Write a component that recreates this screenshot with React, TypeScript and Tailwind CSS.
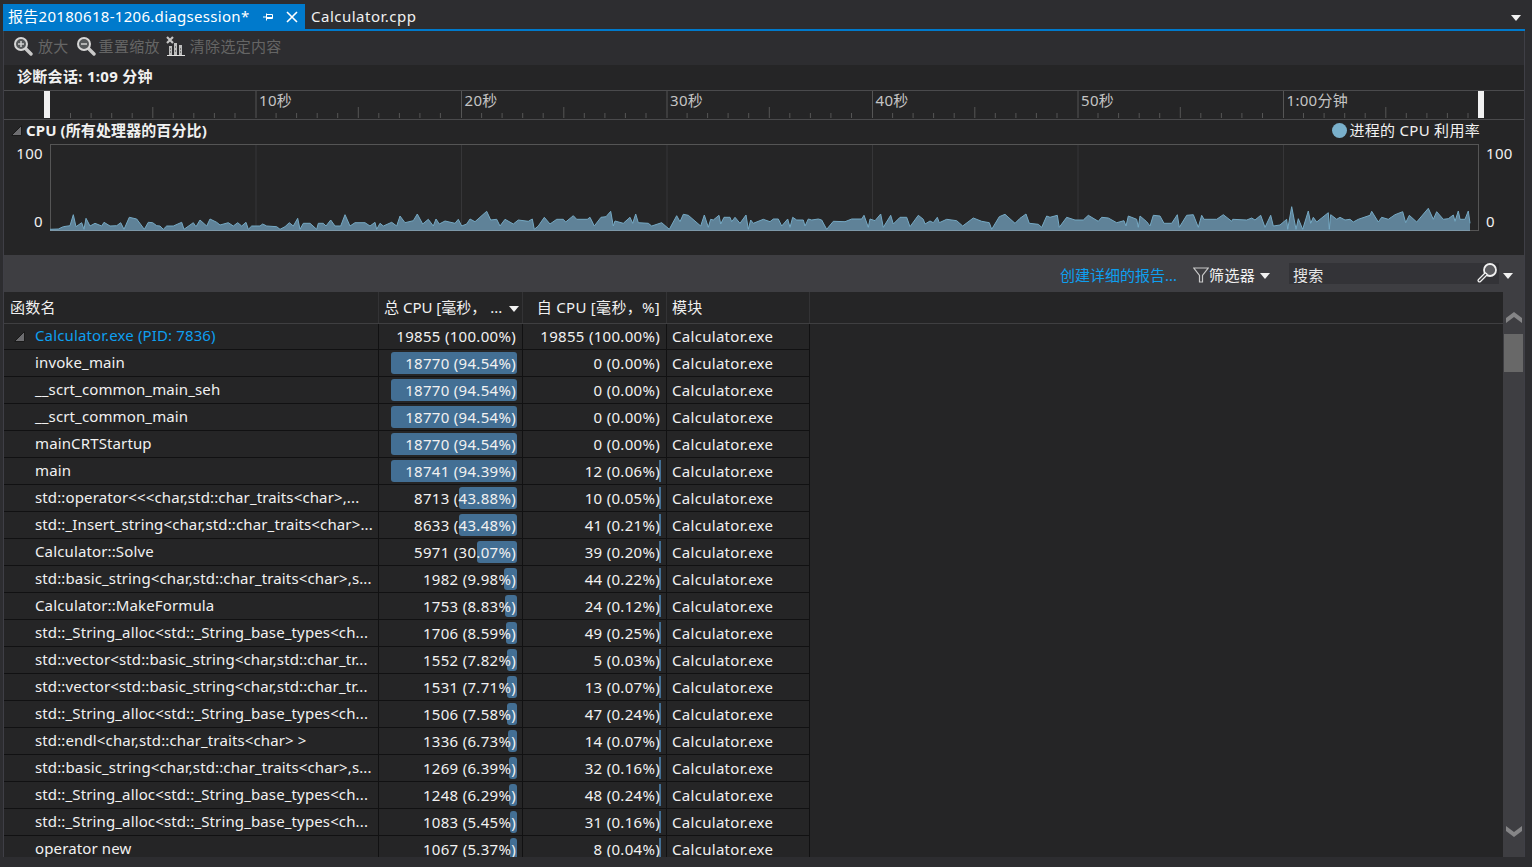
import React from 'react';

const rows: [string, string, number, string, number][] = [
  ['Calculator.exe (PID: 7836)', '19855 (100.00%)', 0, '19855 (100.00%)', 0],
  ['invoke_main', '18770 (94.54%)', 94.54, '0 (0.00%)', 0],
  ['__scrt_common_main_seh', '18770 (94.54%)', 94.54, '0 (0.00%)', 0],
  ['__scrt_common_main', '18770 (94.54%)', 94.54, '0 (0.00%)', 0],
  ['mainCRTStartup', '18770 (94.54%)', 94.54, '0 (0.00%)', 0],
  ['main', '18741 (94.39%)', 94.39, '12 (0.06%)', 0.06],
  ['std::operator<<<char,std::char_traits<char>,...', '8713 (43.88%)', 43.88, '10 (0.05%)', 0.05],
  ['std::_Insert_string<char,std::char_traits<char>...', '8633 (43.48%)', 43.48, '41 (0.21%)', 0.21],
  ['Calculator::Solve', '5971 (30.07%)', 30.07, '39 (0.20%)', 0.2],
  ['std::basic_string<char,std::char_traits<char>,s...', '1982 (9.98%)', 9.98, '44 (0.22%)', 0.22],
  ['Calculator::MakeFormula', '1753 (8.83%)', 8.83, '24 (0.12%)', 0.12],
  ['std::_String_alloc<std::_String_base_types<ch...', '1706 (8.59%)', 8.59, '49 (0.25%)', 0.25],
  ['std::vector<std::basic_string<char,std::char_tr...', '1552 (7.82%)', 7.82, '5 (0.03%)', 0.03],
  ['std::vector<std::basic_string<char,std::char_tr...', '1531 (7.71%)', 7.71, '13 (0.07%)', 0.07],
  ['std::_String_alloc<std::_String_base_types<ch...', '1506 (7.58%)', 7.58, '47 (0.24%)', 0.24],
  ['std::endl<char,std::char_traits<char> >', '1336 (6.73%)', 6.73, '14 (0.07%)', 0.07],
  ['std::basic_string<char,std::char_traits<char>,s...', '1269 (6.39%)', 6.39, '32 (0.16%)', 0.16],
  ['std::_String_alloc<std::_String_base_types<ch...', '1248 (6.29%)', 6.29, '48 (0.24%)', 0.24],
  ['std::_String_alloc<std::_String_base_types<ch...', '1083 (5.45%)', 5.45, '31 (0.16%)', 0.16],
  ['operator new', '1067 (5.37%)', 5.37, '8 (0.04%)', 0.04],
];

// traced from the reference, x and y are 3x page pixels per segment
const seg0 = [150,268,175,267,190,260,210,257,220,224,228,260,245,248,252,268,258,235,270,258,285,250,305,258,312,247,330,258,350,257,362,248,372,268,388,232,410,237,433,268,445,247,458,248,470,257,480,258,490,268,500,258,520,258,545,247,552,268,580,248,588,260,600,240,620,258,630,237,650,247,660,255,685,248,700,258,713,248,725,258,738,247,745,268,755,258,780,258,788,252,800,258,830,260,840,268,855,260,868,248,880,258,893,235,900,268,910,250,930,250,950,268,955,250,970,250,978,258,992,240,1005,258,1022,258,1035,224,1050,258,1065,248,1095,248,1110,258,1125,247,1130,268,1140,250,1150,258,1175,247,1190,258,1200,228,1215,248,1240,242,1252,222,1268,252,1285,238,1300,258,1308,237,1318,252,1335,243,1365,250,1375,238,1385,258,1400,252,1410,237,1425,245,1460,214,1472,240,1490,238];
const seg1 = [0,258,15,238,40,252,55,240,85,244,97,237,103,268,115,258,133,232,150,252,170,238,190,238,197,246,220,227,230,238,262,238,270,232,283,258,303,232,318,230,332,214,340,258,345,243,370,250,390,232,398,250,407,222,415,248,445,250,455,258,485,248,508,268,530,227,540,245,550,223,565,226,602,258,613,225,625,262,632,238,640,240,657,226,662,252,672,232,690,232,695,245,705,232,720,250,738,225,745,268,752,240,760,250,790,238,810,245,820,237,835,237,845,258,863,237,870,262,878,232,890,240,910,240,915,258,925,237,935,240,955,237,965,240,980,268,1000,244,1035,245,1055,237,1085,237,1092,226,1105,262,1110,237,1125,242,1142,222,1150,262,1172,226,1180,252,1200,232,1220,232,1230,260,1255,226,1270,238,1275,252,1290,243,1300,248,1312,232,1318,248,1340,238,1370,242,1388,258,1420,234,1445,244,1468,248,1475,268,1498,230,1515,223,1545,250];
const seg2 = [0,235,18,222,28,250,55,253,65,262,80,228,90,232,112,226,118,262,140,232,165,240,190,240,205,226,235,244,245,232,265,234,290,248,312,242,318,258,325,228,350,238,355,262,360,228,380,245,390,258,400,226,420,228,432,250,455,250,472,224,478,262,500,226,520,224,535,262,545,226,552,238,590,238,610,224,635,244,638,238,680,240,695,234,705,240,722,226,735,262,752,226,760,258,780,255,800,238,803,268,815,200,828,268,835,236,848,268,865,213,872,250,880,232,890,246,925,218,928,268,932,224,950,238,960,232,975,240,990,238,1000,246,1015,238,1050,226,1055,214,1075,246,1085,232,1105,238,1125,224,1148,215,1157,248,1168,226,1190,246,1225,205,1240,238,1250,215,1270,238,1285,236,1300,225,1305,244,1315,213,1320,238,1335,238,1345,213,1350,250];

const toPts = (seg: number[], ox: number) => {
  const out: string[] = [];
  for (let i = 0; i < seg.length; i += 2) {
    out.push(`${(ox + seg[i] / 3).toFixed(1)},${(140 + seg[i + 1] / 3).toFixed(1)}`);
  }
  return out;
};
const line = [...toPts(seg0, 0), ...toPts(seg1, 500), ...toPts(seg2, 1020)].join(' ');
const area = `50,230 ${line} 1470,230`;

const majors = [256, 461.5, 667, 872.5, 1078, 1283.5];
const labels = ['10秒', '20秒', '30秒', '40秒', '50秒', '1:00分钟'];

const ticks: { x: number; kind: number }[] = [];
for (let i = 1; i <= 70; i++) {
  const x = 50 + i * 20.55;
  if (x > 1476) break;
  ticks.push({ x, kind: i % 10 === 0 ? 2 : i % 5 === 0 ? 1 : 0 });
}

const Triangle = ({ className }: { className: string }) => (
  <svg width="10" height="6" viewBox="0 0 10 6" className={className}>
    <path d="M0 0h10L5 6z" fill="#f1f1f1" />
  </svg>
);

const Corner = ({ className }: { className: string }) => (
  <svg width="11" height="11" viewBox="0 0 11 11" className={className}>
    <path d="M10.500 .5v10H.5z" fill="#6d6d70" stroke="#1a1a1a" strokeWidth="1" />
  </svg>
);

const ZoomIcon = ({ minus }: { minus?: boolean }) => (
  <svg width="20" height="20" viewBox="0 0 20 20">
    <path d="M12 12l6 6" stroke="#c9c9c9" strokeWidth="3.4" strokeLinecap="round" />
    <circle cx="8" cy="8" r="6" fill="#55585a" stroke="#d6d6d6" strokeWidth="2" />
    <path d="M5 8h6" stroke="#d0d0d0" strokeWidth="1.5" />
    {!minus && <path d="M8 5v6" stroke="#d0d0d0" strokeWidth="1.5" />}
  </svg>
);

const ClearIcon = () => (
  <svg width="20" height="20" viewBox="0 0 20 20">
    <path d="M1 1l6 6M7 1L1 7" stroke="#c4c4c4" strokeWidth="2.2" />
    <path d="M3 10h3v9H3zM8 7h3v12H8zM13 9h3v10h-3z" fill="#bdbdbd" />
    <path d="M1 19.500h18" stroke="#e0e0e0" strokeWidth="1" />
    <path d="M4 13h1M9 11h1M14 13h1M4 16h1M9 15h1M14 16h1" stroke="#3a3a3a" strokeWidth="1" />
  </svg>
);

const Chevron = ({ down }: { down?: boolean }) => (
  <svg width="16" height="12" viewBox="0 0 16 12">
    <path d={down ? 'M0 1l8 6 8-6v5l-8 6-8-6z' : 'M0 11l8-6 8 6V6L8 0 0 6z'} fill="#858587" />
  </svg>
);

export default function App() {
  return (
    <div
      className="w-[1532px] h-[867px] overflow-hidden bg-[#2d2d30] pl-[3px] pr-[7px] pb-[10px] flex flex-col text-[#f1f1f1] text-[15px] tracking-[0.3px]"
      style={{ fontFamily: '"Noto Sans", "Noto Sans CJK SC", sans-serif' }}
    >
      {/* Tab strip */}
      <div className="h-[31px] shrink-0 pt-[4px] flex border-b-2 border-[#007acc] relative">
        <div className="w-[302px] bg-[#007acc] flex items-center pl-[5px] text-white">
          <span className="w-[249px] whitespace-nowrap">报告20180618-1206.diagsession*</span>
          <svg width="12" height="12" viewBox="0 0 12 12" className="ml-[5px]">
            <path d="M1 6h3M4.500 2.500v7M4.500 3.500h6v4h-6M4.500 6.500h6" stroke="#fff" strokeWidth="1" fill="none" />
          </svg>
          <svg width="14" height="14" viewBox="0 0 14 14" className="ml-[11px]">
            <path d="M2 2l10 10M12 2L2 12" stroke="#fff" strokeWidth="1.600" />
          </svg>
        </div>
        <div className="pl-[6px] flex items-center tracking-[0.5px]">Calculator.cpp</div>
        <Triangle className="ml-auto mr-[4px] mt-[11px]" />
      </div>

      <div className="flex-1 min-h-0 flex flex-col border-x border-[#3f3f46]">
        {/* Toolbar */}
        <div className="h-[34px] shrink-0 flex items-center pl-[9px] pb-[4px] text-[#656565]">
          <ZoomIcon />
          <span className="ml-[5px]">放大</span>
          <span className="ml-[7px]"><ZoomIcon minus /></span>
          <span className="ml-[3px]">重置缩放</span>
          <span className="ml-[6px]"><ClearIcon /></span>
          <span className="ml-[4px]">清除选定内容</span>
        </div>

        {/* Session + ruler + chart */}
        <div className="h-[190px] shrink-0 bg-[#252526] flex flex-col">
          <div className="h-[25px] shrink-0 flex items-center pl-[13px] pb-[2px] font-bold">诊断会话: 1:09 分钟</div>

          <div className="h-[30px] shrink-0 relative border-y border-[#4a4a4c]">
            <svg width="1520" height="28" viewBox="4 91 1520 28" className="absolute left-0 top-0">
              {majors.map((x) => (
                <path key={x} d={`M${x} 91v27`} stroke="#555" strokeWidth="1" />
              ))}
              {ticks.filter((t) => t.kind < 2).map((t) => (
                <path key={t.x} d={`M${t.x.toFixed(1)} ${t.kind === 1 ? 107 : 113}V118`} stroke="#555" strokeWidth="1" />
              ))}
              <rect x="44" y="91" width="6" height="27" fill="#f1f1f1" />
              <rect x="1478" y="91" width="6" height="27" fill="#f1f1f1" />
            </svg>
            {labels.map((l, i) => (
              <span
                key={l}
                className="absolute top-[-2px] text-[#c4c4c4] whitespace-nowrap"
                style={{ left: majors[i] - 4 + 3 }}
              >
                {l}
              </span>
            ))}
          </div>

          <div className="h-[24px] shrink-0 flex items-center pl-[7px] pr-[44px] pb-[4px]">
            <Corner className="mr-[4px]" />
            <span className="font-bold tracking-[0.1px]">CPU (所有处理器的百分比)</span>
            <span className="ml-auto w-[15px] h-[15px] rounded-full bg-[#7ab0cb]" />
            <span className="ml-[2px]">进程的 CPU 利用率</span>
          </div>

          <div className="h-[87px] shrink-0 flex">
            <div className="w-[46px] pr-[7px] -mt-[2px] -mb-[1px] flex flex-col justify-between items-end">
              <span>100</span>
              <span>0</span>
            </div>
            <svg width="1429" height="87" viewBox="50 144 1429 87" className="shrink-0">
              <rect x="50.500" y="144.500" width="1428" height="86" fill="none" stroke="#555" strokeWidth="1" />
              {majors.map((x) => (
                <path key={x} d={`M${x} 145v85`} stroke="#363638" strokeWidth="1" />
              ))}
              <polygon points={area} fill="#5f8298" />
              <polyline points={line} fill="none" stroke="#75a9c4" strokeWidth="1" />
              <path d="M50 230.500h1420" stroke="#7d98a8" strokeWidth="1" />
            </svg>
            <div className="flex-1 pl-[7px] -mt-[2px] -mb-[1px] flex flex-col justify-between items-start">
              <span>100</span>
              <span>0</span>
            </div>
          </div>
        </div>

        {/* Filter bar */}
        <div className="h-[37px] shrink-0 bg-[#3e3e42] flex items-center justify-end pr-[11px] pb-[1px]">
          <span className="text-[#0e9fef] mr-[16px] mt-[5px] tracking-normal">创建详细的报告...</span>
          <svg width="16" height="16" viewBox="0 0 16 16" className="mt-[4px]">
            <path d="M.800 1h14.400L9.500 8.500V15h-3V8.500z" fill="none" stroke="#c8c8c8" strokeWidth="1.200" />
          </svg>
          <span className="mt-[5px]">筛选器</span>
          <Triangle className="ml-[5px] mr-[19px] mt-[5px]" />
          <div className="w-[210px] h-[21px] bg-[#333337] flex items-center pl-[4px] pr-[2px] justify-between">
            <span className="text-[#e6e6e6] mt-[4px]">搜索</span>
            <svg width="20" height="20" viewBox="0 0 20 20">
              <circle cx="13" cy="7" r="6" fill="#5a5a5e" stroke="#f1f1f1" strokeWidth="1.800" />
              <path d="M8.500 11.500l-6 6" stroke="#f1f1f1" strokeWidth="4" strokeLinecap="round" />
              <path d="M8.500 11.500l-6 6" stroke="#3e3e42" strokeWidth="1.600" strokeLinecap="round" />
            </svg>
          </div>
          <Triangle className="ml-[4px] mt-[5px]" />
        </div>

        {/* Table */}
        <div className="flex-1 min-h-0 flex">
          <div className="flex-1 min-w-0 bg-[#252526] overflow-hidden">
            <div className="h-[32px] flex border-b border-[#3f3f41]">
              <div className="w-[375px] pl-[6px] flex items-center border-r border-[#333335]">函数名</div>
              <div className="w-[144px] pl-[5px] pr-[3px] flex items-center justify-between border-r border-[#333335] whitespace-nowrap tracking-normal">
                总 CPU [毫秒， ...
                <Triangle className="mt-[3px]" />
              </div>
              <div className="w-[144px] pr-[6px] flex items-center justify-end border-r border-[#333335] whitespace-nowrap">自 CPU [毫秒，%]</div>
              <div className="w-[143px] pl-[5px] flex items-center border-r border-[#333335]">模块</div>
            </div>

            <div className="w-[806px]">
              {rows.map(([name, total, pct, self, selfPct], i) => (
                <div key={i} className={`${i === 0 ? 'h-[26px]' : 'h-[27px]'} flex border-b border-[#111112]`}>
                  <div
                    className={`w-[375px] border-r border-[#111112] flex items-center pl-[31px] pb-[2px] whitespace-nowrap tracking-[0.13px] ${i === 0 ? 'text-[#0e9fef] relative' : ''}`}
                  >
                    {i === 0 && <Corner className="absolute left-[10px] top-[7px]" />}
                    {name}
                  </div>
                  <div className="w-[144px] border-r border-[#111112] relative flex items-center justify-end pr-[6px] whitespace-nowrap">
                    {pct > 0 && (
                      <div
                        className="absolute right-[5px] top-[2px] bottom-[2px] rounded-[3px] bg-[#436f94]"
                        style={{ width: (pct * 133) / 100 }}
                      />
                    )}
                    <span className="relative">{total}</span>
                  </div>
                  <div className="w-[144px] border-r border-[#111112] relative flex items-center justify-end pr-[6px] whitespace-nowrap">
                    {selfPct > 0 && (
                      <div className="absolute right-[5px] top-[2px] bottom-[2px] bg-[#436f94]" style={{ width: Math.max(2, (selfPct * 133) / 100) }} />
                    )}
                    <span className="relative">{self}</span>
                  </div>
                  <div className="w-[143px] border-r border-[#111112] flex items-center pl-[5px]">Calculator.exe</div>
                </div>
              ))}
            </div>
          </div>

          {/* Scrollbar */}
          <div className="w-[21px] shrink-0 bg-[#3e3e42] flex flex-col items-center pt-[20px] pb-[20px]">
            <Chevron />
            <div className="w-[19px] h-[38px] mt-[10px] bg-[#686868]" />
            <div className="mt-auto"><Chevron down /></div>
          </div>
        </div>
      </div>
    </div>
  );
}
